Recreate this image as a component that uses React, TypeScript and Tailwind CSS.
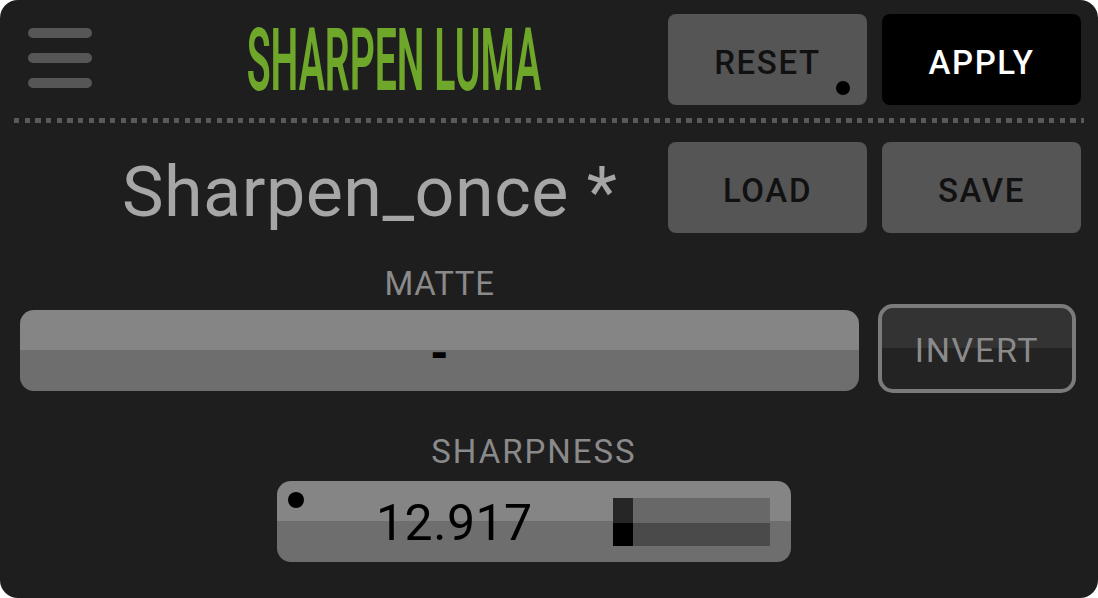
export default function App() {
  const btn =
    "shrink-0 w-[199px] h-[91px] rounded-[8px] flex items-center justify-center pt-[5px] text-[33px] leading-none font-medium tracking-[0.05em]";
  return (
    <div className="w-[1098px] h-[598px] bg-white">
      <div className="relative w-full h-full bg-[#1e1e1e] rounded-[18px] overflow-hidden flex flex-col font-['Roboto',sans-serif]">
        {/* Top row */}
        <div className="flex items-start pt-[14px] pr-[17px]">
          <div className="shrink-0 flex flex-col gap-[15px] pt-[14px] pl-[28px] w-[92px]">
            <div className="h-[10px] w-[64px] rounded-full bg-[#565656]" />
            <div className="h-[10px] w-[64px] rounded-full bg-[#565656]" />
            <div className="h-[10px] w-[64px] rounded-full bg-[#565656]" />
          </div>
          <div className="shrink-0 w-[576px] h-[91px] flex items-center justify-center pl-[28px] pt-[1px]">
            <div className="w-0 flex justify-center">
              <span className="shrink-0 text-[88px] leading-none font-semibold text-[#6fa72b] scale-x-[0.445] whitespace-nowrap inline-block">
                SHARPEN LUMA
              </span>
            </div>
          </div>
          <div className="flex gap-[15px]">
            <div className={btn + " relative bg-[#555555] text-[#111111]"}>
              RESET
              <div className="absolute left-[168px] top-[67px] w-[14px] h-[14px] rounded-full bg-black" />
            </div>
            <div className={btn + " bg-black text-white"}>APPLY</div>
          </div>
        </div>

        {/* Dotted separator */}
        <div className="mt-[13px] ml-[14px] w-[1070px] h-[5px] bg-[repeating-linear-gradient(90deg,#595959_0_5.33px,transparent_5.33px_10.67px)]" />

        {/* Preset row */}
        <div className="flex items-start mt-[19px] pr-[17px]">
          <div className="flex-1 h-[91px] flex items-center pl-[122px] pt-[9px]">
            <span className="text-[70px] leading-none text-[#a6a6a6] whitespace-nowrap tracking-[0.5px]">
              Sharpen_once *
            </span>
          </div>
          <div className="flex gap-[15px]">
            <div className={btn + " bg-[#555555] text-[#111111]"}>LOAD</div>
            <div className={btn + " bg-[#555555] text-[#111111]"}>SAVE</div>
          </div>
        </div>

        {/* MATTE label */}
        <div className="mt-[30px] ml-[20px] w-[839px] h-[40px] flex items-center justify-center">
          <span className="text-[33px] leading-none text-[#8a8a8a] tracking-[0.02em]">MATTE</span>
        </div>

        {/* Matte row */}
        <div className="flex items-start mt-[1px] pl-[20px] gap-[19px]">
          <div className="mt-[6px] w-[839px] h-[81px] rounded-[14px] bg-[linear-gradient(#858585_50%,#6e6e6e_50%)] flex items-center justify-center pt-[6px]">
            <span className="text-[44px] leading-none text-black font-black">-</span>
          </div>
          <div className="w-[198px] h-[89px] rounded-[15px] border-[4px] border-[#7b7b7b] bg-[linear-gradient(#333333_50%,#232323_50%)] flex items-center justify-center pt-[3px]">
            <span className="text-[34px] leading-none text-[#8a8a8a] tracking-[0.05em]">INVERT</span>
          </div>
        </div>

        {/* SHARPNESS label */}
        <div className="mt-[38px] ml-[277px] w-[514px] h-[40px] flex items-center justify-center">
          <span className="text-[33px] leading-none text-[#8a8a8a] tracking-[0.06em]">SHARPNESS</span>
        </div>

        {/* Sharpness box */}
        <div className="relative mt-[10px] ml-[277px] w-[514px] h-[81px] rounded-[14px] bg-[linear-gradient(#858585_50%,#6e6e6e_50%)] flex items-center">
          <div className="absolute left-[11px] top-[11px] w-[16px] h-[16px] rounded-full bg-black" />
          <div className="w-[336px] pl-[99px] pt-[3px] flex items-center">
            <span className="text-[50px] leading-none text-black tracking-[0.01em]">12.917</span>
          </div>
          <div className="w-[157px] h-[48px] flex bg-[linear-gradient(#686868_53%,#4a4a4a_53%)]">
            <div className="w-[20px] h-full bg-[linear-gradient(#262626_53%,#000000_53%)]" />
          </div>
        </div>
      </div>
    </div>
  );
}
